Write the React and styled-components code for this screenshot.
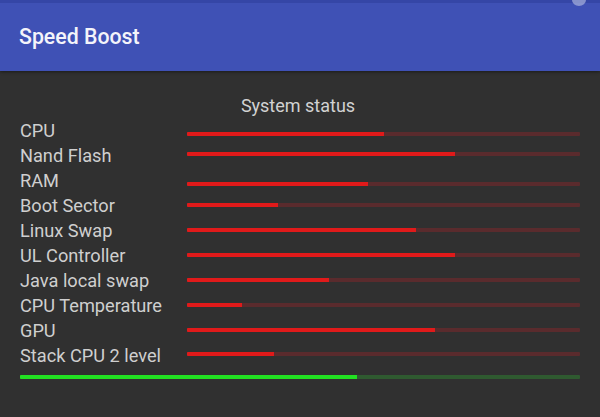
import React from "react";
import styled, { createGlobalStyle } from "styled-components";

const Global = createGlobalStyle`
  html, body { margin: 0; padding: 0; background: #303030; }
  body { font-family: Roboto, "Noto Sans", Arial, sans-serif; }
`;

const Screen = styled.div`
  width: 600px;
  height: 417px;
  background: #303030;
  overflow: hidden;
  display: flex;
  flex-direction: column;
`;

const AppBar = styled.header`
  position: relative;
  height: 68px;
  border-top: 3px solid #3546a6;
  background: #3f51b5;
  display: flex;
  align-items: center;
  padding-left: 19px;
  box-shadow: 0 1px 3px rgba(0, 0, 0, 0.45);
`;

const Title = styled.h1`
  margin: 0;
  font-size: 21.3px;
  font-weight: 500;
  color: #f4f4fa;
  margin-top: -2px;
`;

const MenuDot = styled.span`
  position: absolute;
  right: 14px;
  top: -9px;
  width: 14px;
  height: 12px;
  border-radius: 50%;
  background: #aab2dc;
  opacity: 0.7;
`;

const Content = styled.main`
  padding: 21.5px 20px 0 20px;
  display: flex;
  flex-direction: column;
`;

const Heading = styled.div`
  height: 25px;
  line-height: 25px;
  text-align: center;
  font-size: 18px;
  color: #d2d2d2;
  padding-right: 4px;
`;

const Row = styled.div`
  display: grid;
  grid-template-columns: 167px 1fr;
  height: 25px;
`;

const Label = styled.div`
  line-height: 25px;
  font-size: 18.2px;
  color: #cfcfcf;
  white-space: nowrap;
`;

const Track = styled.div`
  align-self: start;
  margin-top: ${(p) => p.$top}px;
  height: 4px;
  background: ${(p) => p.$track};
  border-radius: 1px;
  overflow: hidden;
  display: flex;
`;

const Fill = styled.div`
  height: 100%;
  background: ${(p) => p.$fill};
`;

const TotalTrack = styled(Track)`
  align-self: stretch;
`;

const rows = [
  ["CPU", 50, 14.5],
  ["Nand Flash", 68.2, 9.5],
  ["RAM", 46, 14.5],
  ["Boot Sector", 23.2, 10],
  ["Linux Swap", 58.2, 10],
  ["UL Controller", 68.2, 10],
  ["Java local swap", 36.2, 10],
  ["CPU Temperature", 14, 10],
  ["GPU", 63.2, 10],
  ["Stack CPU 2 level", 22.2, 9.5],
];

export default function App() {
  return (
    <Screen>
      <Global />
      <AppBar>
        <Title>Speed Boost</Title>
        <MenuDot />
      </AppBar>
      <Content>
        <Heading>System status</Heading>
        {rows.map(([name, pct, top]) => (
          <Row key={name}>
            <Label>{name}</Label>
            <Track $top={top} $track="#5a2b2d">
              <Fill $fill="#e01a1a" style={{ width: `${pct}%` }} />
            </Track>
          </Row>
        ))}
        <TotalTrack $top={7} $track="#2f5a30">
          <Fill $fill="#22e022" style={{ width: "60.2%" }} />
        </TotalTrack>
      </Content>
    </Screen>
  );
}
